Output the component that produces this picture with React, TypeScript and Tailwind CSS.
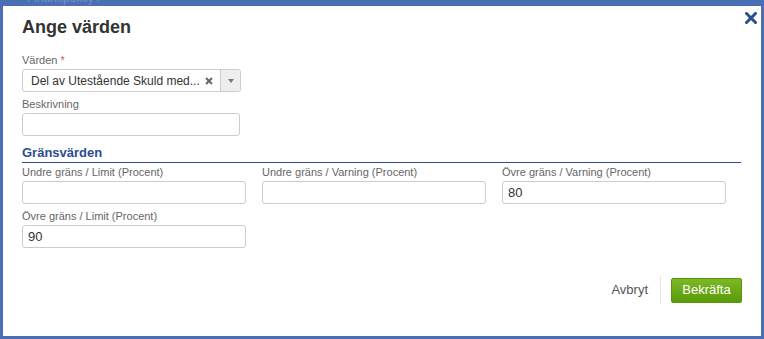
const labelCls = "block text-[11px] leading-[13px] text-[#666]"
const inputCls =
  "block w-full h-[23px] border border-[#cccccc] rounded-[3px] bg-white px-[5px] text-[13px] text-[#333] outline-none"

function Field({ label, value, className }: { label: string; value?: string; className?: string }) {
  return (
    <div className={className}>
      <label className={labelCls}>{label}</label>
      <input className={inputCls + " mt-[2px]"} defaultValue={value} />
    </div>
  )
}

export default function App() {
  return (
    <div
      className="w-[764px] h-[339px] bg-[#4b6fb5] overflow-hidden"
      style={{ fontFamily: '"Liberation Sans", Arial, sans-serif' }}
    >
      <div className="h-[6px] overflow-hidden pl-[27px]">
        <div className="-mt-[9px] text-[12px] leading-[14px] text-[#7390cc]">Finanspolicy &gt;</div>
      </div>
      <div className="ml-[3px] w-[758px] h-[330px] bg-white px-[19px] relative">
        <button className="absolute right-[4px] top-[6px] w-[12px] h-[12px] text-[#2b4d8f]" aria-label="Stäng">
          <svg viewBox="0 0 12 12" width="12" height="12">
            <path d="M1.5 1.5 L10.5 10.5 M10.5 1.5 L1.5 10.5" stroke="currentColor" strokeWidth="3" strokeLinecap="square" />
          </svg>
        </button>

        <h2 className="pt-[11px] text-[18px] leading-[20px] font-bold text-[#333]">Ange värden</h2>

        <div className="mt-[17px] w-[219px]">
          <label className={labelCls}>
            Värden <span className="text-[#d9534f]">*</span>
          </label>
          <div className="mt-[2px] flex h-[23px] border border-[#cccccc] rounded-[3px] bg-white">
            <div className="flex-1 flex items-center pl-[8px] pr-[7px] min-w-0">
              <span className="flex-1 truncate text-[12px] text-[#333]">Del av Utestående Skuld med...</span>
              <svg viewBox="0 0 8 8" width="8" height="8" className="ml-[3px] shrink-0">
                <path d="M1 1 L7 7 M7 1 L1 7" stroke="#666" strokeWidth="2" />
              </svg>
            </div>
            <div className="w-[20px] border-l border-[#cccccc] bg-[#eeeeee] rounded-r-[3px] flex items-center justify-center">
              <svg viewBox="0 0 6 4" width="6" height="4">
                <path d="M0 0 L6 0 L3 4 Z" fill="#777" />
              </svg>
            </div>
          </div>
        </div>

        <Field label="Beskrivning" className="mt-[6px] w-[218px]" />

        <div className="mt-[9px] text-[13px] leading-[15px] font-bold text-[#2b4d8f]">Gränsvärden</div>
        <div className="mt-[2px] h-px bg-[#2b4d8f] mr-[1px]" />

        <div className="mt-[3px] grid grid-cols-[224px_224px_224px] gap-x-[16px] gap-y-[6px]">
          <Field label="Undre gräns / Limit (Procent)" />
          <Field label="Undre gräns / Varning (Procent)" />
          <Field label="Övre gräns / Varning (Procent)" value="80" />
          <Field label="Övre gräns / Limit (Procent)" value="90" />
        </div>

        <div className="mt-[28px] flex justify-end items-center">
          <button className="text-[13px] text-[#555] pr-[12px]">Avbryt</button>
          <div className="w-px h-[28px] bg-[#e5e5e5]" />
          <button className="ml-[10px] h-[25px] w-[71px] rounded-[2px] bg-gradient-to-b from-[#7cb824] to-[#5a9a08] text-white text-[13px] border border-[#5b9410]">
            Bekräfta
          </button>
        </div>
      </div>
    </div>
  )
}
